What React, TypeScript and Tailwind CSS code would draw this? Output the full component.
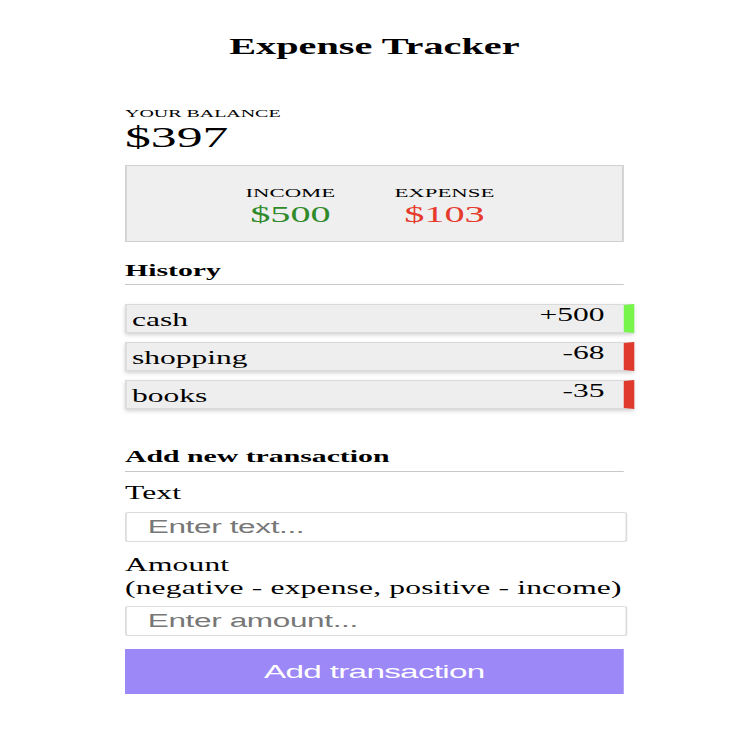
import { useState } from "react";

type Transaction = { id: number; text: string; amount: number };

const TRANSACTIONS: Transaction[] = [
  { id: 1, text: "cash", amount: 500 },
  { id: 2, text: "shopping", amount: -68 },
  { id: 3, text: "books", amount: -35 },
];

export default function App() {
  const [text, setText] = useState("");
  const [amount, setAmount] = useState("");

  const income = TRANSACTIONS.filter((t) => t.amount > 0).reduce((s, t) => s + t.amount, 0);
  const expense = -TRANSACTIONS.filter((t) => t.amount < 0).reduce((s, t) => s + t.amount, 0);
  const balance = income - expense;

  return (
    <div className="min-h-screen bg-white font-['Liberation_Serif',serif] text-black">
      {/* the whole card is drawn wide, like the reference */}
      <div className="ml-[125px] w-[285px] origin-left scale-x-[1.75] pt-[33px]">
        <h1 className="text-center text-[23px] font-bold leading-[27px]">Expense Tracker</h1>

        <h4 className="mt-[47px] text-[11.4px] uppercase leading-[13px]">Your Balance</h4>
        <p className="text-[29.5px] leading-[34px]">${balance}</p>

        <div className="mt-[11px] flex h-[77px] justify-center border border-[#d0d0d0] bg-[#efefef] pr-[8px] pt-[19px]">
          <div className="w-[88px] text-center">
            <h4 className="text-[13px] uppercase leading-[15px]">Income</h4>
            <p className="mt-[2px] text-[23px] leading-[26px] text-[#2f8a2a]">${income}</p>
          </div>
          <div className="w-[88px] text-center">
            <h4 className="text-[13px] uppercase leading-[15px]">Expense</h4>
            <p className="mt-[2px] text-[23px] leading-[26px] text-[#e53a2c]">${expense}</p>
          </div>
        </div>

        <h3 className="mt-[19px] border-b border-[#c8c8c8] pb-[3px] text-[17px] font-bold leading-[20px]">
          History
        </h3>
        <ul className="mt-[19px] flex flex-col gap-[9px]">
          {TRANSACTIONS.map((t) => (
            <li
              key={t.id}
              className={`-mr-[6px] flex h-[29px] justify-between border border-r-[6px] border-[#dadada] bg-[#eeeeee] pl-[3px] pr-[11px] text-[18px] leading-[20px] shadow-[0_2px_3px_rgba(0,0,0,0.18)] ${
                t.amount > 0 ? "border-r-[#77f54b]" : "border-r-[#e03a2f]"
              }`}
            >
              <span className="pt-[5px]">{t.text}</span>
              <span>{t.amount > 0 ? `+${t.amount}` : t.amount}</span>
            </li>
          ))}
        </ul>

        <h3 className="mt-[38px] border-b border-[#c8c8c8] pb-[4px] text-[17px] font-bold leading-[20px]">
          Add new transaction
        </h3>
        <form onSubmit={(e) => e.preventDefault()}>
          <label className="mt-[10px] block text-[18px] leading-[23px] tracking-[0.1px]">Text</label>
          <input
            type="text"
            value={text}
            onChange={(e) => setText(e.target.value)}
            placeholder="Enter text..."
            className="-mr-[2px] mt-[7px] block h-[30px] w-[calc(100%+2px)] rounded-[2px] border border-[#dcdcdc] bg-white pl-[12px] font-['Liberation_Sans',sans-serif] text-[18px] tracking-[-0.2px] outline-none placeholder:text-[#777]"
          />
          <label className="mt-[12px] block text-[18px] leading-[23px] tracking-[0.1px]">
            Amount
            <br />
            (negative - expense, positive - income)
          </label>
          <input
            type="text"
            value={amount}
            onChange={(e) => setAmount(e.target.value)}
            placeholder="Enter amount..."
            className="-mr-[2px] mt-[6px] block h-[30px] w-[calc(100%+2px)] rounded-[2px] border border-[#dcdcdc] bg-white pl-[12px] font-['Liberation_Sans',sans-serif] text-[18px] tracking-[-0.2px] outline-none placeholder:text-[#777]"
          />
          <button
            type="submit"
            className="mt-[13px] flex h-[45px] w-full items-center justify-center bg-[#9c88f7] font-['Liberation_Sans',sans-serif] text-[19px] leading-[22px] tracking-[-0.4px] text-white"
          >
            Add transaction
          </button>
        </form>
      </div>
    </div>
  );
}
